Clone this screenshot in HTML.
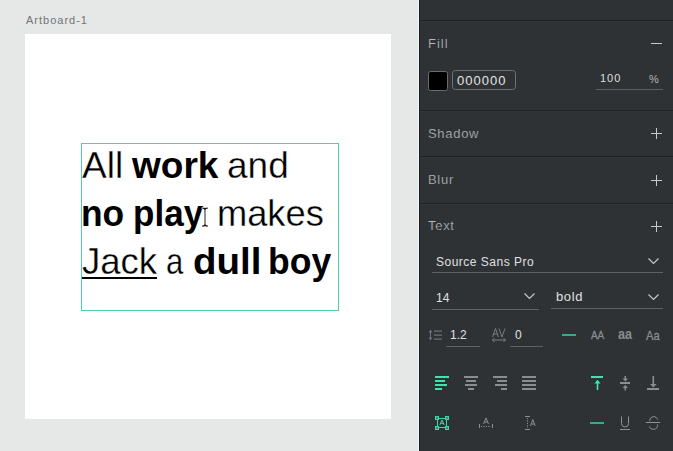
<!DOCTYPE html>
<html><head><meta charset="utf-8">
<style>
html,body{margin:0;padding:0;width:673px;height:451px;overflow:hidden;background:#e6e8e7;}
body{position:relative;font-family:"Liberation Sans",sans-serif;}
.a{position:absolute;white-space:pre;}
.w{position:absolute;white-space:pre;font-size:37px;line-height:37px;color:#000;transform-origin:0 0;-webkit-text-stroke:0.3px #fff;}
.b{-webkit-text-stroke:0;}
.b{font-weight:700;}
.p{position:absolute;white-space:pre;color:#b6b9bb;-webkit-text-stroke:0.2px #2e3235;}
svg{position:absolute;left:0;top:0;}
</style></head>
<body>
<!-- canvas -->
<div class="a" style="left:26px;top:15px;font-size:11px;line-height:11px;color:#727476;letter-spacing:1px;">Artboard-1</div>
<div class="a" style="left:25px;top:34px;width:366px;height:385px;background:#fff;"></div>

<div class="w" style="left:82px;top:147px;">All</div>
<div class="w b" style="left:132px;top:147px;">work</div>
<div class="w" style="left:227px;top:147px;">and</div>

<div class="w b" style="left:81px;top:195px;transform:scaleX(0.955)">no</div>
<div class="w b" style="left:132.5px;top:195px;transform:scaleX(0.947)">play</div>
<div class="w" style="left:216.5px;top:195px;transform:scaleX(0.98)">makes</div>

<div class="w" style="left:81.6px;top:243px;transform:scaleX(0.987)">Jack</div>
<div class="w" style="left:166.3px;top:243px;transform:scaleX(0.84)">a</div>
<div class="w b" style="left:193.3px;top:243px;transform:scaleX(1.04)">dull</div>
<div class="w b" style="left:267.7px;top:243px;transform:scaleX(0.96)">boy</div>

<svg width="673" height="451" viewBox="0 0 673 451">
  <rect x="82" y="277" width="75" height="2" fill="#000"/>
  <rect x="81.5" y="143.5" width="257" height="167" fill="none" stroke="#4fd0a8" stroke-width="1"/>
  <!-- I-beam cursor -->
  <g fill="none" stroke-linecap="round">
    <path d="M202.8 208.2c1 0 2.2 0.3 2.2 1.5c0-1.2 1.2-1.5 2.2-1.5" stroke="#fff" stroke-width="2.6"/>
    <path d="M205 209.5v15" stroke="#fff" stroke-width="2.6"/>
    <path d="M202.8 226c1 0 2.2-0.3 2.2-1.5c0 1.2 1.2 1.5 2.2 1.5" stroke="#fff" stroke-width="2.6"/>
    <path d="M202.8 208.2c1 0 2.2 0.3 2.2 1.5c0-1.2 1.2-1.5 2.2-1.5" stroke="#111" stroke-width="1.3"/>
    <path d="M205 209.5v15" stroke="#222" stroke-width="1"/>
    <path d="M202.8 226c1 0 2.2-0.3 2.2-1.5c0 1.2 1.2 1.5 2.2 1.5" stroke="#111" stroke-width="1.3"/>
  </g>
</svg>

<!-- panel -->
<svg width="673" height="451" viewBox="0 0 673 451">
  <rect x="418" y="0" width="1" height="451" fill="#f3f5f4"/>
  <rect x="419" y="0" width="1" height="451" fill="#1b1e21"/>
  <rect x="420" y="0" width="253" height="451" fill="#2e3235"/>
  <rect x="420" y="20" width="253" height="1" fill="#1e2124"/>
  <rect x="420" y="21" width="253" height="1" fill="#333537"/>
  <rect x="420" y="110" width="253" height="1" fill="#1e2124"/>
  <rect x="420" y="111" width="253" height="1" fill="#333537"/>
  <rect x="420" y="156" width="253" height="1" fill="#1e2124"/>
  <rect x="420" y="157" width="253" height="1" fill="#333537"/>
  <rect x="420" y="203" width="253" height="1" fill="#1e2124"/>
  <rect x="420" y="204" width="253" height="1" fill="#333537"/>

  <!-- fill minus -->
  <rect x="651" y="43" width="11" height="1" fill="#c6c9cc"/>
  <!-- swatch -->
  <rect x="428.5" y="71.5" width="19" height="19" rx="2" fill="#000" stroke="#6a6d70" stroke-width="1"/>
  <!-- hex input -->
  <rect x="452.5" y="70.5" width="63" height="19" rx="3" fill="none" stroke="#6f7275" stroke-width="1"/>
  <!-- opacity underline -->
  <rect x="596" y="89" width="67" height="1" fill="#5c5f62"/>

  <!-- plus icons -->
  <g fill="#c6c9cc">
    <rect x="651" y="133" width="11" height="1"/><rect x="656" y="128" width="1" height="11"/>
    <rect x="651" y="180" width="11" height="1"/><rect x="656" y="175" width="1" height="11"/>
    <rect x="651" y="226" width="11" height="1"/><rect x="656" y="221" width="1" height="11"/>
  </g>

  <!-- dropdown underlines -->
  <rect x="432" y="272" width="231" height="1" fill="#5f6265"/>
  <rect x="432" y="309" width="107" height="1" fill="#5f6265"/>
  <rect x="551" y="308" width="112" height="1" fill="#5f6265"/>
  <!-- chevrons -->
  <g fill="none" stroke="#c6c9cc" stroke-width="1.2">
    <path d="M648.5 258.5l5 5 5-5"/>
    <path d="M524.5 293.5l5 5 5-5"/>
    <path d="M648.5 294.5l5 5 5-5"/>
  </g>
  <!-- small inputs underlines -->
  <rect x="446" y="346" width="34" height="1" fill="#5f6265"/>
  <rect x="510" y="346" width="33" height="1" fill="#5f6265"/>

  <!-- line height icon -->
  <g fill="#6e7276">
    <rect x="430" y="330" width="1" height="10"/>
    <path d="M428.5 332.5l2-3 2 3z"/>
    <path d="M428.5 337.5l2 3 2-3z"/>
    <rect x="434" y="330.5" width="8" height="1.2"/>
    <rect x="434" y="334.5" width="8" height="1.2"/>
    <rect x="434" y="338.5" width="8" height="1.2"/>
  </g>
  <!-- AV icon -->
  <g fill="none" stroke="#7a7e82" stroke-width="1">
    <path d="M492.5 337l3-8.5 3 8.5M493.7 334h3.6"/>
    <path d="M499 328.5l3 8.5 3-8.5"/>
    <path d="M492.5 340h13M494.5 338l-2 2 2 2M503.5 338l2 2-2 2"/>
  </g>
  <!-- green line -->
  <rect x="562" y="334" width="14" height="2" fill="#3aa98a"/>

  <!-- align icons -->
  <g fill="#3fe4ad">
    <rect x="435" y="376" width="14" height="2"/>
    <rect x="435" y="380" width="10" height="2"/>
    <rect x="435" y="384" width="12" height="2"/>
    <rect x="435" y="388" width="7" height="2"/>
  </g>
  <g fill="#8a8d91">
    <rect x="464" y="376" width="14" height="2"/>
    <rect x="466" y="380" width="10" height="2"/>
    <rect x="465" y="384" width="12" height="2"/>
    <rect x="468" y="388" width="6" height="2"/>

    <rect x="493" y="376" width="14" height="2"/>
    <rect x="497" y="380" width="10" height="2"/>
    <rect x="495" y="384" width="12" height="2"/>
    <rect x="501" y="388" width="6" height="2"/>

    <rect x="522" y="376" width="14" height="2"/>
    <rect x="522" y="380" width="14" height="2"/>
    <rect x="522" y="384" width="14" height="2"/>
    <rect x="522" y="388" width="14" height="2"/>
  </g>
  <!-- vertical align -->
  <g fill="#3fe4ad">
    <rect x="591" y="376" width="12" height="2"/>
    <rect x="596.7" y="381" width="1.6" height="9"/>
    <path d="M594.5 383.5l3-3.8 3 3.8z"/>
  </g>
  <g fill="#8a8d91">
    <rect x="624.5" y="376" width="1.5" height="3"/>
    <path d="M622.5 378.5h5.5l-2.75 3z"/>
    <rect x="620" y="382" width="10" height="2"/>
    <path d="M622.5 388h5.5l-2.75-3z"/>
    <rect x="624.5" y="387.5" width="1.5" height="3"/>

    <rect x="652.5" y="376" width="1.6" height="9"/>
    <path d="M650 384l3.3 3.6 3.3-3.6z"/>
    <rect x="647" y="388" width="12" height="2"/>
  </g>

  <!-- bottom row -->
  <g fill="none" stroke="#3fd6a6" stroke-width="1">
    <rect x="437.5" y="418.5" width="9" height="9"/>
    <rect x="435.5" y="416.5" width="3" height="3" fill="#2a9475"/>
    <rect x="445.5" y="416.5" width="3" height="3" fill="#2a9475"/>
    <rect x="435.5" y="426.5" width="3" height="3" fill="#2a9475"/>
    <rect x="445.5" y="426.5" width="3" height="3" fill="#2a9475"/>
    <path d="M439.8 425l2.2-5 2.2 5M440.7 423.3h2.6"/>
  </g>

  <g fill="none" stroke="#8a8d91" stroke-width="1">
    <path d="M483.5 424l2.5-6 2.5 6M484.5 422h3"/>
    <path d="M479.5 424v4M492.5 424v4"/>
    <path d="M481 426.5h10" stroke-dasharray="1.2 1.2"/>
    <path d="M525 416.5h5M525 429.5h5"/>
    <path d="M527.5 418v10" stroke-dasharray="1.2 1.2"/>
    <path d="M530.5 426l2.3-6.5 2.3 6.5M531.5 424h2.6"/>
  </g>
  <rect x="590" y="422" width="14" height="2" fill="#3aa98a"/>
  <g fill="none" stroke="#8f9295" stroke-width="1">
    <path d="M621.5 416.5v7a3.5 3.5 0 0 0 7 0v-7"/>
    <path d="M620 429.5h10"/>
    <path d="M649.8 421.3C649.5 418.3 651.5 416.7 653.7 416.7C655.8 416.7 657.2 417.8 657.5 419.5"/>
    <path d="M657.5 424.5C658 427.5 656 429.3 653.7 429.3C651.5 429.3 649.8 428.3 649.3 426.5"/>
    <path d="M646 422.5h14"/>
  </g>
</svg>

<div class="p" style="left:428px;top:37px;font-size:13px;line-height:13px;letter-spacing:1px;">Fill</div>
<div class="a" style="left:457px;top:74px;font-size:13px;line-height:13px;color:#e6e6e6;letter-spacing:1px;">000000</div>
<div class="a" style="left:600px;top:73px;font-size:11px;line-height:11px;color:#dedede;letter-spacing:1px;">100</div>
<div class="a" style="left:649px;top:74px;font-size:11px;line-height:11px;color:#b4b7b9;">%</div>

<div class="p" style="left:428px;top:127px;font-size:13px;line-height:13px;letter-spacing:0.7px;">Shadow</div>
<div class="p" style="left:428px;top:173px;font-size:13px;line-height:13px;letter-spacing:0.7px;">Blur</div>
<div class="p" style="left:428px;top:219px;font-size:13px;line-height:13px;letter-spacing:0.7px;">Text</div>

<div class="a" style="left:436px;top:256px;font-size:12px;line-height:12px;color:#e0e0e0;letter-spacing:0.5px;">Source Sans Pro</div>
<div class="a" style="left:436px;top:292px;font-size:12px;line-height:12px;color:#e0e0e0;">14</div>
<div class="a" style="left:556px;top:290px;font-size:13px;line-height:13px;color:#e0e0e0;letter-spacing:0.6px;">bold</div>
<div class="a" style="left:450px;top:329px;font-size:12px;line-height:12px;color:#e0e0e0;">1.2</div>
<div class="a" style="left:515px;top:329px;font-size:12px;line-height:12px;color:#e0e0e0;">0</div>

<div class="a" style="left:590.5px;top:330px;font-size:11px;line-height:11px;color:#8a8d90;transform-origin:0 0;transform:scaleX(0.9);-webkit-text-stroke:0.3px #8a8d90;">AA</div>
<div class="a" style="left:617.8px;top:326px;font-size:15px;line-height:15px;color:#8a8d90;font-weight:700;transform-origin:0 0;transform:scaleX(0.84);">aa</div>
<div class="a" style="left:646.3px;top:329px;font-size:13px;line-height:13px;color:#8a8d90;transform-origin:0 0;transform:scaleX(0.86);-webkit-text-stroke:0.3px #8a8d90;">Aa</div>
</body></html>
